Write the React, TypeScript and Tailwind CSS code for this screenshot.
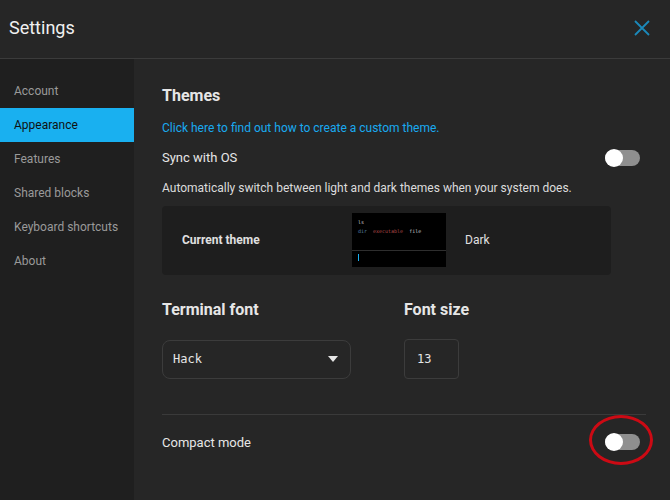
import React, { useState } from 'react';

const navItems = ['Account', 'Appearance', 'Features', 'Shared blocks', 'Keyboard shortcuts', 'About'];

const Toggle: React.FC<{ on?: boolean }> = ({ on = false }) => (
  <div className={`relative w-[35px] h-[16px] rounded-full ${on ? 'bg-[#19b0f0]' : 'bg-[#8f8f8f]'}`}>
    <div className={`absolute top-[-1px] w-[18px] h-[18px] rounded-full bg-white ${on ? 'right-0' : 'left-0'}`} />
  </div>
);

export default function App() {
  const [active] = useState('Appearance');

  return (
    <div className="w-[670px] h-[500px] bg-[#262626] flex flex-col overflow-hidden font-['Roboto',sans-serif] text-[#e6e6e6]">
      {/* Header */}
      <div className="h-[59px] shrink-0 flex items-center justify-between pl-[9px] pr-[20px] border-b border-[#3b3b3b]">
        <h1 className="text-[18px] text-[#f0f0f0] leading-none pb-[2px]">Settings</h1>
        <svg width="16" height="16" viewBox="0 0 16 16" className="mt-[-3px]">
          <path d="M1 1 L15 15 M15 1 L1 15" stroke="#1b89ba" strokeWidth="1.8" fill="none" />
        </svg>
      </div>

      <div className="flex flex-1 min-h-0">
        {/* Sidebar */}
        <div className="w-[134px] shrink-0 bg-[#1f1f1f] pt-[15px]">
          {navItems.map((item) => (
            <div
              key={item}
              className={`h-[34px] flex items-center pl-[14px] text-[12px] ${
                item === active ? 'bg-[#19b0f0] text-[#101010]' : 'text-[#9a9a9a]'
              }`}
            >
              {item}
            </div>
          ))}
        </div>

        {/* Content */}
        <div className="flex-1 pl-[28px] pr-[24px] pt-[27px]">
          <h2 className="text-[16px] font-bold text-[#e6e6e6] leading-[20px]">Themes</h2>
          <div className="mt-[14px] text-[12px] text-[#19aaf0] leading-[16px]">
            Click here to find out how to create a custom theme.
          </div>

          <div className="mt-[12px] flex items-center justify-between pr-[6px]">
            <span className="text-[13px] text-[#e6e6e6]">Sync with OS</span>
            <Toggle />
          </div>

          <div className="mt-[12px] text-[12px] text-[#dcdcdc] leading-[16px]">
            Automatically switch between light and dark themes when your system does.
          </div>

          <div className="mt-[10px] w-[449px] h-[69px] bg-[#1e1e1e] rounded-[4px] flex items-center">
            <span className="pl-[20px] w-[190px] text-[12px] font-bold text-[#e0e0e0]">Current theme</span>
            <div className="w-[94px] h-[54px] bg-black flex flex-col font-['DejaVu_Sans_Mono',monospace] text-[5px]">
              <div className="flex-1 pl-[6px] pt-[5px] leading-[9px]">
                <div className="text-[#cfcfcf]">ls</div>
                <div className="flex gap-[6px]">
                  <span className="text-[#5b86a8]">dir</span>
                  <span className="text-[#b34a4a]">executable</span>
                  <span className="text-[#cfcfcf]">file</span>
                </div>
              </div>
              <div className="h-[17px] border-t border-[#2e2e2e] pl-[6px] pt-[3px]">
                <div className="w-[1px] h-[7px] bg-[#19b0f0]" />
              </div>
            </div>
            <span className="pl-[19px] text-[12px] text-[#e0e0e0]">Dark</span>
          </div>

          <div className="mt-[25px] flex gap-[53px]">
            <div>
              <h3 className="text-[16px] font-bold text-[#e6e6e6] leading-[20px]">Terminal font</h3>
              <div className="mt-[20px] w-[189px] h-[39px] rounded-[8px] border border-[#3c3c3c] flex items-center justify-between pl-[10px] pr-[12px]">
                <span className="font-['DejaVu_Sans_Mono',monospace] text-[12px] text-[#e6e6e6]">Hack</span>
                <svg width="10" height="6" viewBox="0 0 10 6">
                  <path d="M0 0 L10 0 L5 6 Z" fill="#e6e6e6" />
                </svg>
              </div>
            </div>
            <div>
              <h3 className="text-[16px] font-bold text-[#e6e6e6] leading-[20px]">Font size</h3>
              <div className="mt-[19px] w-[55px] h-[40px] rounded-[4px] border border-[#3c3c3c] flex items-center pl-[12px]">
                <span className="font-['DejaVu_Sans_Mono',monospace] text-[12px] text-[#e6e6e6]">13</span>
              </div>
            </div>
          </div>

          <div className="mt-[35px] border-t border-[#3a3a3a]" />

          <div className="mt-[18px] flex items-center justify-between pr-[6px]">
            <span className="text-[13px] text-[#e6e6e6]">Compact mode</span>
            <div className="relative">
              <Toggle />
              <div className="absolute left-[-16px] top-[-19px] w-[64px] h-[50px] rounded-[50%] border-[3px] border-[#cc0a14]" />
            </div>
          </div>
        </div>
      </div>
    </div>
  );
}
